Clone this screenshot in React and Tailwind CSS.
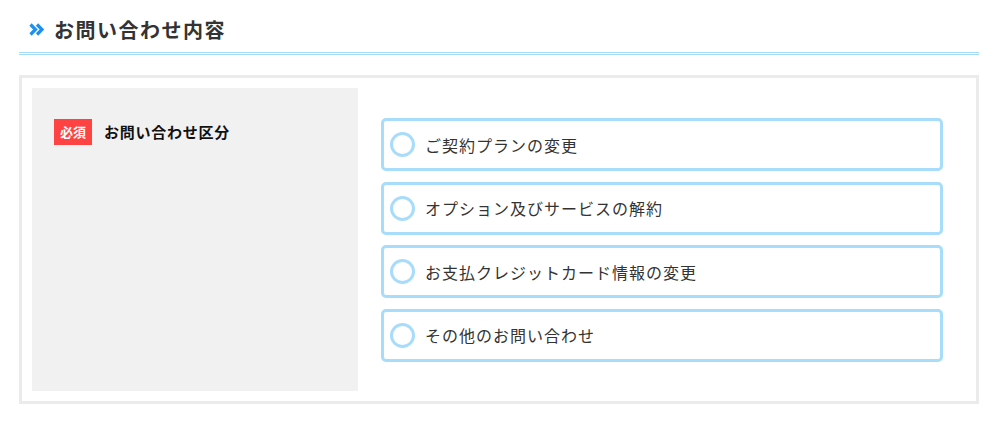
import React from 'react'

const options = [
  'ご契約プランの変更',
  'オプション及びサービスの解約',
  'お支払クレジットカード情報の変更',
  'その他のお問い合わせ',
]

function DoubleChevron() {
  return (
    <svg width="15" height="13" viewBox="0 0 15 13" className="shrink-0">
      <path d="M1.5 1.5 L6.5 6.5 L1.5 11.5" fill="none" stroke="#1e8fef" strokeWidth="3.2" />
      <path d="M8 1.5 L13 6.5 L8 11.5" fill="none" stroke="#1e8fef" strokeWidth="3.2" />
    </svg>
  )
}

export default function App() {
  const font = { fontFamily: '"Noto Sans CJK JP", "Noto Sans", sans-serif' }
  return (
    <div className="w-[1005px] h-[443px] bg-white pl-[19px] pr-[26px]" style={font}>
      {/* Heading */}
      <div className="flex items-center gap-[10px] pl-[10px] pt-[7px] h-[55px] border-b-[3px] border-double border-[#a6dbfb]">
        <DoubleChevron />
        <h2 className="text-[20px] font-bold text-[#333] leading-none tracking-[1.5px]">お問い合わせ内容</h2>
      </div>

      {/* Form box */}
      <div className="mt-[20px] w-[960px] border-[3px] border-[#ebebeb] p-[10px] flex">
        <div className="w-[326px] h-[303px] bg-[#f1f1f1] pl-[22px] pt-[31px]">
          <div className="flex items-center gap-[12px]">
            <span className="w-[38px] h-[26px] bg-[#ff4242] text-white text-[13px] font-bold flex items-center justify-center">
              必須
            </span>
            <span className="text-[15px] font-bold text-[#111] tracking-[0.75px]">お問い合わせ区分</span>
          </div>
        </div>

        <div className="flex-1 pl-[23px] pr-[23px] pt-[30px] flex flex-col gap-[10.5px]">
          {options.map((opt) => (
            <label
              key={opt}
              className="h-[53px] border-[3px] border-[#a8dcfb] rounded-[5px] flex items-center pl-[6px] gap-[10px] cursor-pointer"
            >
              <span className="w-[25px] h-[25px] rounded-full border-[3px] border-[#a8dcfb] bg-white shrink-0" />
              <span className="text-[16px] text-[#333] tracking-[1px]">{opt}</span>
            </label>
          ))}
        </div>
      </div>
    </div>
  )
}
